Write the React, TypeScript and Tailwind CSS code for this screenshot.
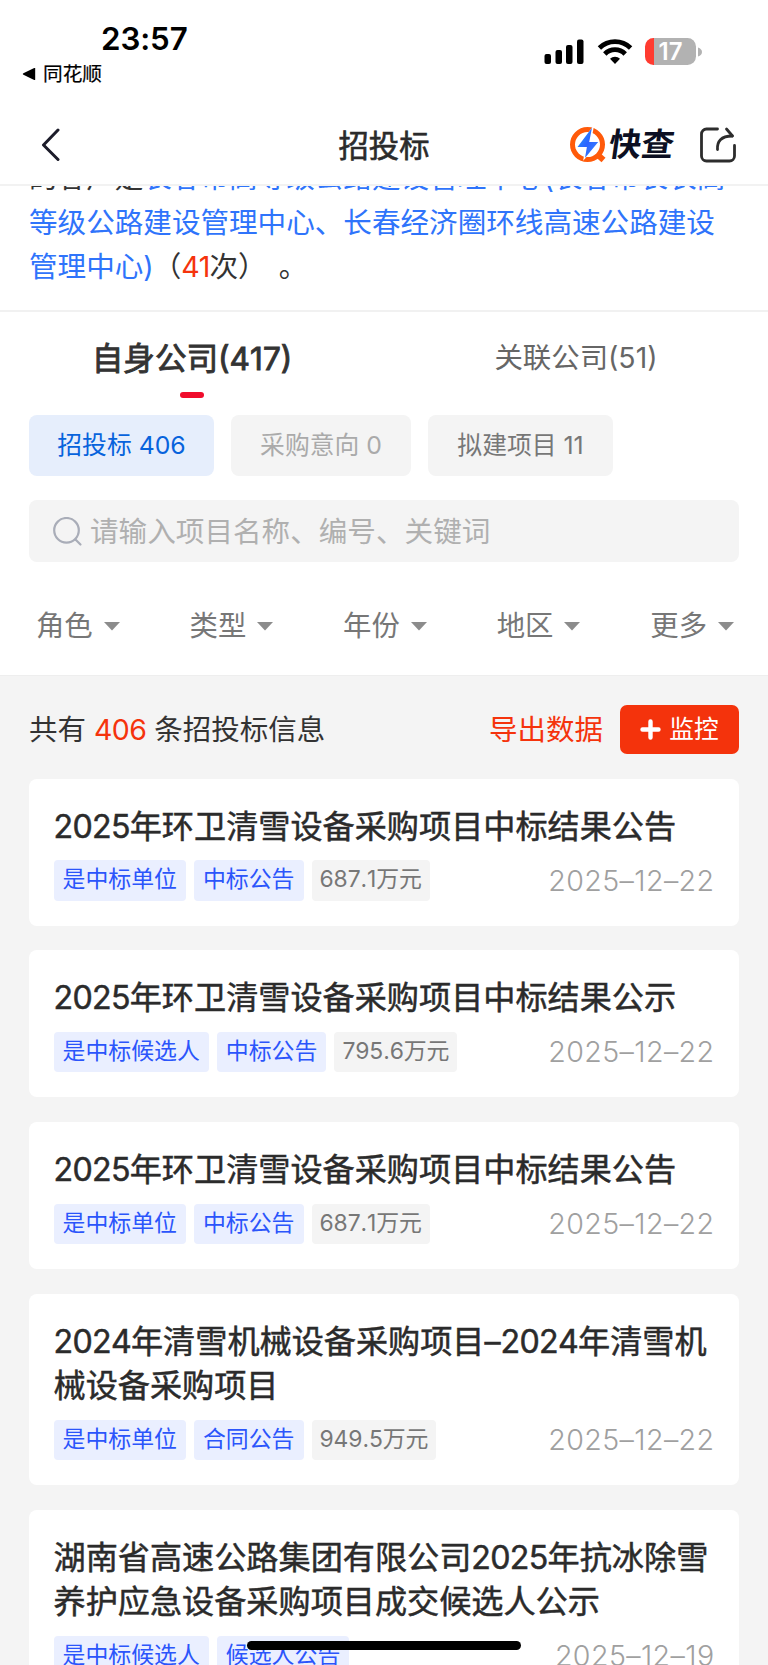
import React from "react";

const FONT = "font-['Inter','Noto_Sans_CJK_SC',sans-serif] [font-kerning:none]";

type Bid = { title: string[]; tags: string[]; amount?: string; date: string };

const bids: Bid[] = [
  { title: ["2025年环卫清雪设备采购项目中标结果公告"], tags: ["是中标单位", "中标公告"], amount: "687.1万元", date: "2025–12–22" },
  { title: ["2025年环卫清雪设备采购项目中标结果公示"], tags: ["是中标候选人", "中标公告"], amount: "795.6万元", date: "2025–12–22" },
  { title: ["2025年环卫清雪设备采购项目中标结果公告"], tags: ["是中标单位", "中标公告"], amount: "687.1万元", date: "2025–12–22" },
  { title: ["2024年清雪机械设备采购项目–2024年清雪机", "械设备采购项目"], tags: ["是中标单位", "合同公告"], amount: "949.5万元", date: "2025–12–22" },
  { title: ["湖南省高速公路集团有限公司2025年抗冰除雪", "养护应急设备采购项目成交候选人公示"], tags: ["是中标候选人", "候选人公告"], date: "2025–12–19" },
];

function StatusBar() {
  return (
    <div className="flex h-[98px] shrink-0 justify-between bg-white text-black">
      <div className="flex flex-col pl-[22px] pt-[18px]">
        <div className="pl-[79px] text-[31.3px] font-semibold leading-[42px] tracking-[-0.1px]">23:57</div>
        <div className="flex items-center gap-[7px] text-[19.7px] leading-[28px]">
          <svg width="14" height="14" viewBox="0 0 14 14">
            <path d="M13.2 1.6v10.8q0 1-1 .6L1.4 7.8q-1.4-.8 0-1.6L12.2 1q1-.4 1 .6z" />
          </svg>
          <span className="[-webkit-text-stroke:0.2px_#000]">同花顺</span>
        </div>
      </div>
      <div className="flex items-start pr-[65px] pt-[38px]">
        <svg width="40" height="27" viewBox="0 0 40 27" className="mr-[13px]">
          <rect x="0.5" y="16" width="6.5" height="10" rx="2" />
          <rect x="11.5" y="12" width="6.5" height="14" rx="2" />
          <rect x="22" y="7" width="6.5" height="19" rx="2" />
          <rect x="33" y="1.5" width="6.5" height="24.5" rx="2" />
        </svg>
        <svg width="36" height="27" viewBox="0 0 36 27" className="mr-[12px]" fill="none" stroke="#000" strokeWidth="4.8">
          <path d="M2.4 10a22.5 22.5 0 0 1 31.2 0" />
          <path d="M7.8 16a14.2 14.2 0 0 1 20.4 0" />
          <path d="M18 26l-5-5.2a7.2 7.2 0 0 1 10 0z" fill="#000" stroke="none" />
        </svg>
        <div className="flex items-center">
          <div className="flex h-[27px] w-[51px] items-center justify-center overflow-hidden rounded-[8.5px] bg-[linear-gradient(90deg,#ff3b30_0_9px,#b2b2b2_9px)] text-[24px] font-semibold text-white">
            <span>17</span>
          </div>
          <svg width="5" height="10" viewBox="0 0 5 10" className="ml-[2px]" fill="#b2b2b2">
            <path d="M0 0.5Q4 2 4 5T0 9.5z" />
          </svg>
        </div>
      </div>
    </div>
  );
}

function NavBar() {
  return (
    <div className="grid h-[88px] shrink-0 grid-cols-3 items-center border-b-2 border-[#f2f2f2] bg-white pt-[7px]">
      <svg width="22" height="34" viewBox="0 0 22 34" className="ml-[40px]" fill="none" stroke="#1c1c2a" strokeWidth="3" strokeLinecap="round" strokeLinejoin="round">
        <path d="M18 2L3.5 17L18 31.5" />
      </svg>
      <div className="pt-[2px] text-center text-[30.3px] leading-[40px] text-[#2b2b2b] [-webkit-text-stroke:0.6px_#2b2b2b]">招投标</div>
      <div className="flex items-center justify-end pr-[32px]">
        <svg width="38" height="38" viewBox="0 0 38 38" fill="none">
          <defs>
            <linearGradient id="bolt" x1="0" y1="0" x2="1" y2="1">
              <stop offset="0" stopColor="#20a4ff" />
              <stop offset="0.5" stopColor="#2b62ff" />
              <stop offset="1" stopColor="#3f8cff" />
            </linearGradient>
          </defs>
          <path d="M30 30L34.5 34" stroke="#ff5a0a" strokeWidth="6" />
          <circle cx="18.5" cy="18.6" r="15" stroke="#ff5a0a" strokeWidth="5" />
          <path d="M24.4 0L6.5 22.5h9.5l-1.8 12.3L30.4 16.4h-8.6L25 0z" fill="#fff" />
          <path d="M23 1.8L8.5 20.9h9.4l-1.9 11L29.2 16h-9z" fill="url(#bolt)" />
        </svg>
        <span className="ml-[2px] -skew-x-[8deg] pt-px text-[32.5px] font-bold leading-[40px] text-[#0c0f22]">快查</span>
        <svg width="36" height="36" viewBox="0 0 36 36" className="ml-[26px]" fill="none" stroke="#2d2d2d" strokeWidth="2.8" strokeLinecap="round" strokeLinejoin="round">
          <path d="M17.5 2H6.5a5 5 0 0 0-5 5v22a5 5 0 0 0 5 5h23a5 5 0 0 0 5-5V18.5" />
          <path d="M17.5 22.5c-.6-8 3.5-13.5 14.7-13.5" />
          <path d="M26.5 2l6 7" />
        </svg>
      </div>
    </div>
  );
}

function Summary() {
  return (
    <div className="h-[126px] shrink-0 overflow-hidden border-b-2 border-[#f1f1f1] bg-white pl-[29px]">
      <div className="-mt-[30px] whitespace-nowrap text-[28.58px] leading-[44.7px] text-[#2f74fb]">
        <div><span className="text-[#333]">的客户是</span>长春市高等级公路建设管理中心(长春市长农高</div>
        <div>等级公路建设管理中心、长春经济圈环线高速公路建设</div>
        <div>
          管理中心)<span className="text-[#333]"><span className="-ml-[1px]">（</span><span className="tracking-[-1px] text-[#f5330c]">41</span>次）<span className="-ml-[2px]">　。</span></span>
        </div>
      </div>
    </div>
  );
}

function Filters() {
  return (
    <div className="flex h-[364px] shrink-0 flex-col border-b border-[#eee] bg-white">
      <div className="grid grid-cols-2 text-center leading-[44px]">
        <div className="flex flex-col items-center pt-[25px]">
          <span className="text-[31.6px] text-[#333] [-webkit-text-stroke:0.9px_#333]">自身公司(417)</span>
          <i className="mt-[11px] h-[6px] w-[24px] rounded-full bg-[#f00d2c]" />
        </div>
        <div className="pt-[24px] text-[28.4px] text-[#666]">关联公司(51)</div>
      </div>
      <div className="mt-[17px] flex gap-[17px] pl-[29px] text-[24.8px] leading-[60px]">
        <div className="h-[61px] w-[185px] rounded-[8px] bg-[#e6eefc] text-center text-[#0763dc]">招投标 406</div>
        <div className="h-[61px] w-[180px] rounded-[8px] bg-[#f4f4f4] text-center text-[#aaa]">采购意向 0</div>
        <div className="h-[61px] w-[185px] rounded-[8px] bg-[#f4f4f4] text-center text-[#777]">拟建项目 11</div>
      </div>
      <div className="mx-[29px] mt-[24px] flex h-[62px] items-center rounded-[8px] bg-[#f4f4f4] pl-[24px] text-[28.6px] text-[#b0b0b0]">
        <svg width="30" height="30" viewBox="0 0 30 30" className="mt-[2px]" fill="none" stroke="#a9adb8" strokeWidth="2.2" strokeLinecap="round">
          <circle cx="13.5" cy="13.3" r="12.3" />
          <path d="M22.5 22.5l5 5" />
        </svg>
        <span className="ml-[7px] pt-px leading-[62px]">请输入项目名称、编号、关键词</span>
      </div>
      <div className="grid grow grid-cols-5 pt-[42px] text-[28.4px] leading-[44px] text-[#777]">
        {["角色", "类型", "年份", "地区", "更多"].map((f) => (
          <div key={f} className="flex h-[44px] items-center justify-center gap-[11px] pl-[2px]">
            {f}
            <svg width="16" height="9" viewBox="0 0 16 9" fill="#8c8c8c"><path d="M0 0h16L8 8.5z" /></svg>
          </div>
        ))}
      </div>
    </div>
  );
}

function TitleLine({ text }: { text: string }) {
  return (
    <div>
      {text.split(/(\d+)/).map((part, i) =>
        /^\d/.test(part) ? <span key={i} className="tracking-[-0.7px]">{part}</span> : part
      )}
    </div>
  );
}

function Card({ bid }: { bid: Bid }) {
  return (
    <div className="rounded-[8px] bg-white px-[24.5px] pb-[25px] pt-[26px]">
      <div className="whitespace-nowrap text-[32.15px] leading-[44.6px] text-[#2b2b2b] [-webkit-text-stroke:0.5px_#2b2b2b]">
        {bid.title.map((line) => <TitleLine key={line} text={line} />)}
      </div>
      <div className="mt-[11px] flex h-[40.5px] items-center gap-[8px] whitespace-nowrap text-[22.9px] leading-[38px]">
        {bid.tags.map((t) => (
          <span key={t} className="h-full rounded-[4px] bg-[#eaefff] px-[9px] text-[#2b55fb]">{t}</span>
        ))}
        {bid.amount && <span className="h-full rounded-[4px] bg-[#f4f4f4] px-[8px] tracking-[-0.1px] text-[#777]">{bid.amount}</span>}
        <span className="ml-auto text-[28.6px] font-light tracking-[0.4px] text-[#a0a0a0]">{bid.date}</span>
      </div>
    </div>
  );
}

export default function App() {
  return (
    <div className={`relative flex h-[1665px] w-[768px] flex-col overflow-hidden bg-[#f4f4f4] ${FONT}`}>
      <StatusBar />
      <NavBar />
      <Summary />
      <Filters />
      <div className="flex h-[102.8px] shrink-0 items-center px-[29px] pt-[5px] text-[28.5px] text-[#333]">
        <span className="whitespace-pre">共有 <span className="tracking-[-0.6px] text-[#f5330c]">406</span> 条招投标信息</span>
        <span className="ml-auto mr-[17px] text-[#f5330c]">导出数据</span>
        <button className="flex h-[49px] w-[119px] items-center justify-center gap-[8px] rounded-[7px] bg-[#f4330c] text-[24.7px] text-white">
          <svg width="21" height="21" viewBox="0 0 21 21" stroke="#fff" strokeWidth="4.4" strokeLinecap="round"><path d="M10.5 2.5v16M2.5 10.5h16" /></svg>
          监控
        </button>
      </div>
      <div className="flex shrink-0 flex-col gap-[24.5px] px-[29px]">
        {bids.map((b, i) => <Card key={i} bid={b} />)}
      </div>
      <div className="absolute left-[247px] top-[1641px] h-[9px] w-[274px] rounded-full bg-black" />
    </div>
  );
}
